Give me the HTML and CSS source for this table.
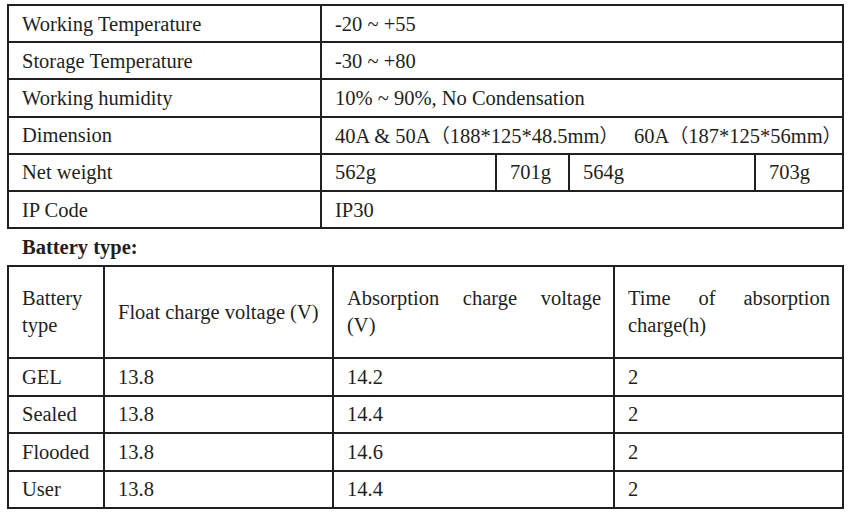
FILE: index.html
```html
<!DOCTYPE html>
<html>
<head>
<meta charset="utf-8">
<link rel="stylesheet" href="styles.css">
</head>
<body>
<div class="page">
  <table class="spec">
    <colgroup>
      <col class="c1"><col class="c2"><col class="c3"><col class="c4"><col class="c5">
    </colgroup>
    <tr><td>Working Temperature</td><td colspan="4">-20 ~ +55</td></tr>
    <tr><td>Storage Temperature</td><td colspan="4">-30 ~ +80</td></tr>
    <tr><td>Working humidity</td><td colspan="4">10% ~ 90%, No Condensation</td></tr>
    <tr><td>Dimension</td><td colspan="4">40A &amp; 50A<span class="fw">（</span>188*125*48.5mm<span class="fw">）</span>&nbsp;&nbsp; 60A<span class="fw">（</span>187*125*56mm<span class="fw">）</span></td></tr>
    <tr><td>Net weight</td><td>562g</td><td>701g</td><td>564g</td><td>703g</td></tr>
    <tr><td>IP Code</td><td colspan="4">IP30</td></tr>
  </table>
  <div class="heading">Battery type:</div>
  <table class="battery">
    <colgroup>
      <col class="b1"><col class="b2"><col class="b3"><col class="b4">
    </colgroup>
    <tr class="head">
      <td>Battery<br>type</td>
      <td>Float charge voltage (V)</td>
      <td><span class="jline">Absorption charge voltage</span>(V)</td>
      <td><span class="jline">Time of absorption</span>charge(h)</td>
    </tr>
    <tr><td>GEL</td><td>13.8</td><td>14.2</td><td>2</td></tr>
    <tr><td>Sealed</td><td>13.8</td><td>14.4</td><td>2</td></tr>
    <tr><td>Flooded</td><td>13.8</td><td>14.6</td><td>2</td></tr>
    <tr><td>User</td><td>13.8</td><td>14.4</td><td>2</td></tr>
  </table>
</div>
</body>
</html>
```

FILE: styles.css
```css
html, body {
  margin: 0;
  padding: 0;
  background: #ffffff;
}

body {
  font-family: "Liberation Serif", "Times New Roman", "Noto Sans CJK SC", serif;
  font-size: 20.5px;
  color: #231f20;
}

.page {
  padding: 4px 6px 0 7px;
}

table {
  border-collapse: collapse;
  width: 837px;
  table-layout: fixed;
}

td {
  border: 2px solid #231f20;
  padding: 0 12px 0 13px;
  vertical-align: middle;
  white-space: nowrap;
  line-height: 24px;
}

.spec tr {
  height: 37.2px;
}

.spec .c1 { width: 313px; }
.spec .c2 { width: 175px; }
.spec .c3 { width: 73px; }
.spec .c4 { width: 186px; }
.spec .c5 { width: 88px; }

.fw {
  font-family: "Noto Sans CJK SC", sans-serif;
  font-size: 19px;
}

.heading {
  font-weight: bold;
  height: 36px;
  line-height: 37px;
  padding-left: 15px;
}

.battery .b1 { width: 96px; }
.battery .b2 { width: 229px; }
.battery .b3 { width: 281px; }
.battery .b4 { width: 229px; }

.battery tr {
  height: 37.5px;
}

.battery tr.head {
  height: 92px;
}

.battery tr.head td {
  white-space: normal;
  line-height: 27px;
}

.jline {
  display: block;
  text-align: justify;
  text-align-last: justify;
}
```
